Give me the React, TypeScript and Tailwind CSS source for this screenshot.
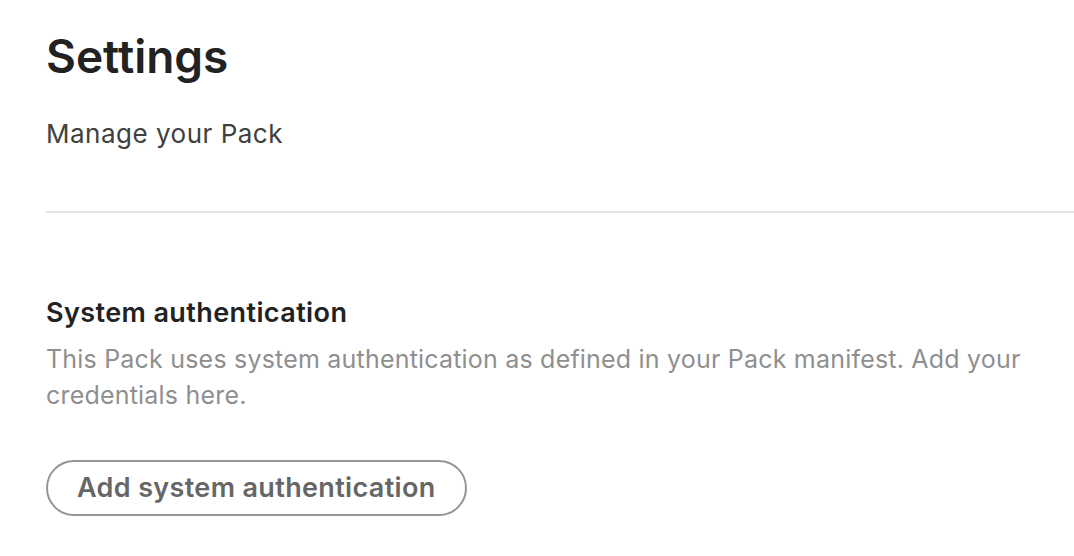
export default function App() {
  return (
    <div className="min-h-[556px] bg-white pl-[46px] pt-[28px] text-[#222]" style={{ fontFamily: 'Inter, "Noto Sans", sans-serif' }}>
      <h1 className="text-[46px] font-semibold leading-[56px] tracking-[0px] text-[#222]">Settings</h1>
      <p className="mt-[34px] text-[26px] leading-[32px] tracking-[0.5px] text-[#404040]">Manage your Pack</p>
      <div className="mt-[61px] h-[2px] bg-[#e3e3e3]" />
      <h2 className="mt-[83px] text-[27px] font-semibold leading-[34px] tracking-[0.4px] text-[#222]">System authentication</h2>
      <p className="mt-[11px] max-w-[1000px] text-[25px] leading-[36px] tracking-[0.2px] text-[#8f8f8f]">
        This Pack uses system authentication as defined in your Pack manifest. Add your credentials here.
      </p>
      <button className="mt-[47px] flex h-[56px] items-center rounded-full border-2 border-[#959595] pl-[29px] pr-[29px] text-[27px] font-semibold tracking-[0.35px] text-[#666]">
        Add system authentication
      </button>
    </div>
  );
}
